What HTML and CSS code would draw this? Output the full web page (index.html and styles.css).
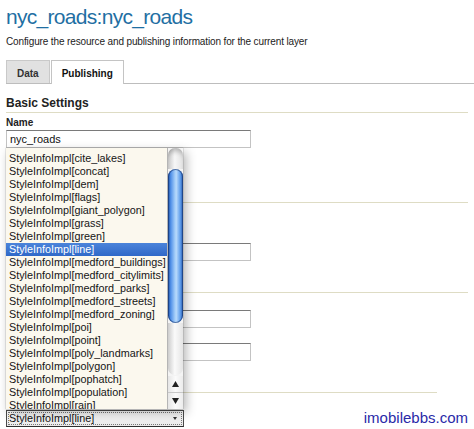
FILE: index.html
```html
<!DOCTYPE html>
<html>
<head>
<meta charset="utf-8">
<link rel="stylesheet" href="styles.css">
</head>
<body>
<div class="page">
  <h1 class="title">nyc_roads:nyc_roads</h1>
  <p class="subtitle">Configure the resource and publishing information for the current layer</p>
  <div class="tabs">
    <div class="tab">Data</div>
    <div class="tab active">Publishing</div>
  </div>

  <h2 class="section first">Basic Settings</h2>
  <div class="label first-label">Name</div>
  <div class="input"><span>nyc_roads</span></div>

  <div class="section s2"></div>
  <div class="label l2"></div>
  <div class="input"></div>

  <div class="section s3"></div>
  <div class="label l3"></div>
  <div class="input"></div>
  <div class="label l4"></div>
  <div class="input"></div>

  <div class="section s4"></div>
  <div class="label l3"></div>
  <div class="select">
    <span class="select-text">StyleInfoImpl[line]</span>
    <span class="select-arrow"></span>
  </div>

  <div class="popup">
    <div class="options">
      <div class="items">
        <div class="item-partial"></div>
        <div class="item">StyleInfoImpl[cite_lakes]</div>
        <div class="item">StyleInfoImpl[concat]</div>
        <div class="item">StyleInfoImpl[dem]</div>
        <div class="item">StyleInfoImpl[flags]</div>
        <div class="item">StyleInfoImpl[giant_polygon]</div>
        <div class="item">StyleInfoImpl[grass]</div>
        <div class="item">StyleInfoImpl[green]</div>
        <div class="item selected">StyleInfoImpl[line]</div>
        <div class="item">StyleInfoImpl[medford_buildings]</div>
        <div class="item">StyleInfoImpl[medford_citylimits]</div>
        <div class="item">StyleInfoImpl[medford_parks]</div>
        <div class="item">StyleInfoImpl[medford_streets]</div>
        <div class="item">StyleInfoImpl[medford_zoning]</div>
        <div class="item">StyleInfoImpl[poi]</div>
        <div class="item">StyleInfoImpl[point]</div>
        <div class="item">StyleInfoImpl[poly_landmarks]</div>
        <div class="item">StyleInfoImpl[polygon]</div>
        <div class="item">StyleInfoImpl[pophatch]</div>
        <div class="item">StyleInfoImpl[population]</div>
        <div class="item">StyleInfoImpl[rain]</div>
      </div>
    </div>
    <div class="scrollbar">
      <div class="track-top"></div>
      <div class="thumb"></div>
      <div class="track-bottom"></div>
      <div class="arrow up"><svg width="7" height="6" viewBox="0 0 7 6"><path d="M3.5 0 L7 6 L0 6 Z" fill="#222"/></svg></div>
      <div class="arrow down"><svg width="7" height="6" viewBox="0 0 7 6"><path d="M0 0 L7 0 L3.5 6 Z" fill="#222"/></svg></div>
    </div>
  </div>

  <div class="watermark">imobilebbs.com</div>
</div>
</body>
</html>
```

FILE: styles.css
```css
html, body {
  margin: 0;
  padding: 0;
  background: #ffffff;
}

body {
  font-family: "Liberation Sans", Arial, sans-serif;
  color: #222;
  width: 474px;
  height: 429px;
  overflow: hidden;
}

.page {
  position: relative;
  padding-left: 6px;
  height: 429px;
}

.title {
  margin: 0;
  padding-top: 4px;
  font-size: 21px;
  line-height: 26px;
  font-weight: normal;
  letter-spacing: -0.7px;
  color: #1f6fa3;
}

.subtitle {
  margin: 6px 0 0;
  font-size: 10px;
  line-height: 12px;
  letter-spacing: -0.13px;
  color: #222;
}

.tabs {
  display: flex;
  margin-top: 12px;
  height: 23px;
  border-bottom: 1px solid #bdbdbd;
  align-items: flex-end;
}

.tab {
  box-sizing: border-box;
  height: 23px;
  padding: 7px 10px 0;
  font-size: 10px;
  font-weight: bold;
  color: #333;
  background: #e1e1e1;
  border: 1px solid #c9c9c9;
  border-bottom: none;
  margin-right: 1px;
}

.tab.active {
  background: #fff;
  border-color: #c4c4c4;
  height: 24px;
  margin-bottom: -1px;
  color: #111;
}

.section {
  margin: 0;
  width: 462px;
  height: 14px;
  font-size: 12px;
  line-height: 14px;
  padding-bottom: 2px;
  border-bottom: 1px solid #dedcc4;
  color: #222;
}

.section.first { margin-top: 12px; }
.section.s2 { margin-top: 38px; }
.section.s3 { margin-top: 15px; }
.section.s4 { margin-top: 15px; width: 431px; }

.label {
  height: 12px;
  font-size: 10px;
  line-height: 12px;
  font-weight: bold;
  color: #222;
  margin-bottom: 1px;
}

.first-label { margin-top: 4px; }
.l2 { margin-top: 27px; }
.l3 { margin-top: 4px; }
.l4 { margin-top: 2px; }

.input {
  box-sizing: border-box;
  width: 245px;
  height: 18px;
  border: 1px solid #c3c3c3;
  border-top-color: #7a7a7a;
  font-size: 11px;
  line-height: 16px;
  padding-left: 3px;
  color: #111;
}

.select {
  box-sizing: border-box;
  width: 178px;
  height: 17px;
  border: 1px solid #4a4a4a;
  border-bottom-color: #2e2e2e;
  background: linear-gradient(#ffffff, #e9e9e9);
  display: flex;
  align-items: center;
  justify-content: space-between;
  padding: 0 6px 0 2px;
  outline: 1px dotted #7a7a7a;
  outline-offset: -3px;
}

.select-text {
  font-size: 10.8px;
  line-height: 13px;
  color: #111;
}

.select-arrow {
  width: 0;
  height: 0;
  border-left: 2px solid transparent;
  border-right: 2px solid transparent;
  border-top: 3px solid #333;
}

.popup {
  position: absolute;
  left: 6px;
  top: 148px;
  width: 177px;
  height: 261px;
  display: flex;
  background: #fbf8ee;
  box-shadow: 3px 4px 10px rgba(0, 0, 0, 0.3), 0 0 1px rgba(0, 0, 0, 0.5);
}

.options {
  width: 162px;
  height: 261px;
  overflow: hidden;
}

.item-partial {
  height: 4px;
}

.item {
  height: 13px;
  line-height: 13px;
  font-size: 10.8px;
  padding-left: 3px;
  color: #151515;
  white-space: nowrap;
}

.item.selected {
  background: linear-gradient(#4b84da, #2f68c8);
  color: #fff;
}

.scrollbar {
  width: 15px;
  height: 261px;
  display: flex;
  flex-direction: column;
  border-left: 1px solid #b5b5b5;
  background: #f4f4f4;
}

.track-top {
  height: 21px;
  background: linear-gradient(90deg, #c8c8c8, #f7f7f7 45%, #e2e2e2);
  border-radius: 7px 7px 0 0;
  box-shadow: inset 0 6px 5px -3px rgba(0,0,0,0.25);
}

.thumb {
  height: 155px;
  border-radius: 8px;
  background: linear-gradient(90deg, #1f4f9e 0%, #4f8fe8 18%, #9fcaf8 45%, #b8dafc 55%, #5f9deb 82%, #2457a8 100%);
  box-shadow: inset 0 0 0 1px rgba(20, 50, 110, 0.6);
}

.track-bottom {
  height: 52px;
  background: linear-gradient(90deg, #cdcdcd, #fafafa 45%, #e4e4e4);
  border-radius: 0 0 7px 7px;
}

.arrow {
  height: 16px;
  display: flex;
  align-items: center;
  justify-content: center;
  background: linear-gradient(90deg, #e6e6e6, #fbfbfb 50%, #ececec);
}

.arrow.up {
  margin-top: 1px;
  border-bottom: 1px solid #c8c8c8;
}

.watermark {
  position: absolute;
  right: 6px;
  bottom: 3px;
  font-size: 15px;
  line-height: 17px;
  color: #2a2aa8;
}
```
